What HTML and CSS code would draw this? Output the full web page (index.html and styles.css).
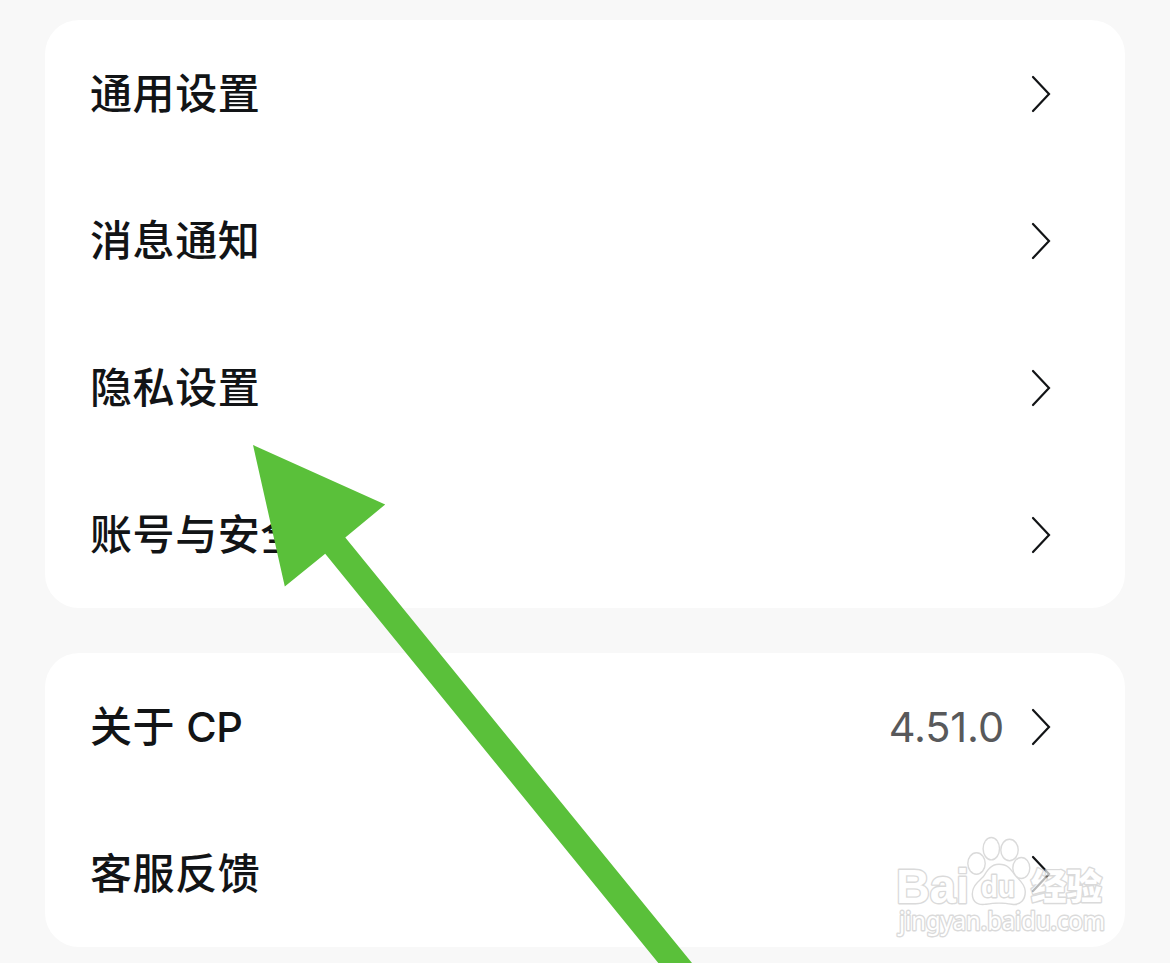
FILE: index.html
```
<!DOCTYPE html>
<html lang="zh-CN">
<head>
<meta charset="utf-8">
<title>设置</title>
<link rel="stylesheet" href="styles.css">
</head>
<body>
<main class="page">
  <section class="card">
    <div class="row"><span class="label">通用设置</span><svg class="chevron" viewBox="0 0 22 40"><path d="M3 3 19 20 3 37"/></svg></div>
    <div class="row"><span class="label">消息通知</span><svg class="chevron" viewBox="0 0 22 40"><path d="M3 3 19 20 3 37"/></svg></div>
    <div class="row"><span class="label">隐私设置</span><svg class="chevron" viewBox="0 0 22 40"><path d="M3 3 19 20 3 37"/></svg></div>
    <div class="row"><span class="label">账号与安全</span><svg class="chevron" viewBox="0 0 22 40"><path d="M3 3 19 20 3 37"/></svg></div>
  </section>
  <section class="card">
    <div class="row"><span class="label">关于 <span class="latin">CP</span></span><span class="value">4.51.0</span><svg class="chevron" viewBox="0 0 22 40"><path d="M3 3 19 20 3 37"/></svg></div>
    <div class="row"><span class="label">客服反馈</span><svg class="chevron" viewBox="0 0 22 40"><path d="M3 3 19 20 3 37"/></svg></div>
  </section>
  <svg class="watermark" viewBox="890 830 225 115">
    <g class="outline">
      <text class="brand" x="896" y="902.5" textLength="73" lengthAdjust="spacingAndGlyphs">Bai</text>
      <ellipse cx="976.5" cy="863.5" rx="8" ry="10"/>
      <ellipse cx="991.3" cy="848.7" rx="7.5" ry="10.5"/>
      <ellipse cx="1009.5" cy="850" rx="8" ry="10"/>
      <ellipse cx="1021.3" cy="868" rx="7.8" ry="9.8"/>
      <path d="M999 865C991 865 988 871 984 877C979 882 973 886 973 894C973 902 979 905 986 903.5C994 902 1004 902 1012 903.5C1020 905 1025 899 1024.5 891C1024 884 1018 880 1014 875C1010 869 1007 865 999 865Z"/>
      <text class="du" x="981" y="897" textLength="34" lengthAdjust="spacingAndGlyphs">du</text>
      <text class="cn" x="1031" y="899.5" textLength="71" lengthAdjust="spacingAndGlyphs">经验</text>
      <text class="site" x="899" y="930" textLength="206" lengthAdjust="spacingAndGlyphs">jingyan.baidu.com</text>
    </g>
  </svg>
  <svg class="arrow" viewBox="0 0 1170 963"><path d="M253 445 385.2 504.5 345.3 537.5 692 963H658.3L325.2 553.7 284.8 586.5Z"/></svg>
</main>
</body>
</html>
```
FILE: styles.css
```
* { box-sizing: border-box; }
body { margin: 0; background: #f8f8f8; }
.page {
  position: relative;
  height: 963px;
  padding: 20px 45px 0;
  display: flex;
  flex-direction: column;
  gap: 45px;
  overflow: hidden;
}
.card { background: #fff; border-radius: 34px; }
.row {
  height: 147px;
  padding: 0 73px 0 45px;
  display: flex;
  align-items: center;
}
.label {
  flex: 1;
  padding-bottom: 6px;
  font: 500 42px/60px "Noto Sans CJK SC", sans-serif;
  letter-spacing: 0.6px;
  color: #121416;
}
.latin { margin-left: 1px; font-family: Inter, sans-serif; font-weight: 500; font-size: 41.5px; line-height: 1; letter-spacing: -0.5px; }
.value {
  margin-right: 26px;
  font: 400 41.5px/60px Inter, sans-serif;
  letter-spacing: -0.1px;
  color: #58595b;
}
.chevron { width: 22px; height: 40px; }
.chevron path { fill: none; stroke: #121416; stroke-width: 2.2; stroke-linecap: round; stroke-linejoin: miter; }
.arrow { position: absolute; left: 0; top: 0; width: 1170px; height: 963px; fill: #5ac03a; }
.watermark { position: absolute; left: 890px; top: 830px; width: 225px; height: 115px; }
.outline { opacity: 0.7; fill: #fff; stroke: #cbcbcb; stroke-width: 2.8; stroke-linejoin: round; paint-order: stroke; }
.brand { font: 700 49px "Liberation Sans", sans-serif; }
.du { font: 700 29px "Liberation Sans", sans-serif; }
.cn { font: 900 36px "Noto Sans CJK SC", sans-serif; }
.site { font: 400 25px "Noto Sans", sans-serif; }
```
